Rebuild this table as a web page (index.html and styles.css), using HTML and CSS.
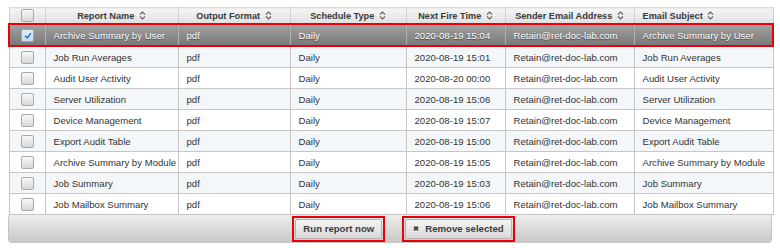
FILE: index.html
```html
<!DOCTYPE html>
<html>
<head>
<meta charset="utf-8">
<link rel="stylesheet" href="styles.css">
</head>
<body>
<div class="grid">
  <table class="tbl">
    <colgroup>
      <col class="c0"><col class="c1"><col class="c2"><col class="c3"><col class="c4"><col class="c5"><col class="c6">
    </colgroup>
    <thead>
      <tr>
        <th class="chk"><span class="box"></span></th>
        <th>Report Name <svg class="sort" width="7" height="9" viewBox="0 0 7 9"><path d="M1 3.5 L3.5 1 L6 3.5 M1 5.5 L3.5 8 L6 5.5" fill="none" stroke="#666" stroke-width="1.2"/></svg></th>
        <th>Output Format <svg class="sort" width="7" height="9" viewBox="0 0 7 9"><path d="M1 3.5 L3.5 1 L6 3.5 M1 5.5 L3.5 8 L6 5.5" fill="none" stroke="#666" stroke-width="1.2"/></svg></th>
        <th>Schedule Type <svg class="sort" width="7" height="9" viewBox="0 0 7 9"><path d="M1 3.5 L3.5 1 L6 3.5 M1 5.5 L3.5 8 L6 5.5" fill="none" stroke="#666" stroke-width="1.2"/></svg></th>
        <th>Next Fire Time <svg class="sort" width="7" height="9" viewBox="0 0 7 9"><path d="M1 3.5 L3.5 1 L6 3.5 M1 5.5 L3.5 8 L6 5.5" fill="none" stroke="#666" stroke-width="1.2"/></svg></th>
        <th>Sender Email Address <svg class="sort" width="7" height="9" viewBox="0 0 7 9"><path d="M1 3.5 L3.5 1 L6 3.5 M1 5.5 L3.5 8 L6 5.5" fill="none" stroke="#666" stroke-width="1.2"/></svg></th>
        <th class="left">Email Subject <svg class="sort" width="7" height="9" viewBox="0 0 7 9"><path d="M1 3.5 L3.5 1 L6 3.5 M1 5.5 L3.5 8 L6 5.5" fill="none" stroke="#666" stroke-width="1.2"/></svg></th>
      </tr>
    </thead>
    <tbody>
      <tr class="sel">
        <td class="chk"><span class="box on"><svg width="10" height="9" viewBox="0 0 10 9"><path d="M2 4.8 L4.2 6.8 L8 2.2" fill="none" stroke="#2a6fc9" stroke-width="1.5"/></svg></span></td>
        <td>Archive Summary by User</td><td>pdf</td><td>Daily</td><td>2020-08-19 15:04</td><td>Retain@ret-doc-lab.com</td><td>Archive Summary by User</td>
      </tr>
      <tr class="alt"><td class="chk"><span class="box"></span></td><td>Job Run Averages</td><td>pdf</td><td>Daily</td><td>2020-08-19 15:01</td><td>Retain@ret-doc-lab.com</td><td>Job Run Averages</td></tr>
      <tr><td class="chk"><span class="box"></span></td><td>Audit User Activity</td><td>pdf</td><td>Daily</td><td>2020-08-20 00:00</td><td>Retain@ret-doc-lab.com</td><td>Audit User Activity</td></tr>
      <tr class="alt"><td class="chk"><span class="box"></span></td><td>Server Utilization</td><td>pdf</td><td>Daily</td><td>2020-08-19 15:06</td><td>Retain@ret-doc-lab.com</td><td>Server Utilization</td></tr>
      <tr><td class="chk"><span class="box"></span></td><td>Device Management</td><td>pdf</td><td>Daily</td><td>2020-08-19 15:07</td><td>Retain@ret-doc-lab.com</td><td>Device Management</td></tr>
      <tr class="alt"><td class="chk"><span class="box"></span></td><td>Export Audit Table</td><td>pdf</td><td>Daily</td><td>2020-08-19 15:00</td><td>Retain@ret-doc-lab.com</td><td>Export Audit Table</td></tr>
      <tr><td class="chk"><span class="box"></span></td><td>Archive Summary by Module</td><td>pdf</td><td>Daily</td><td>2020-08-19 15:05</td><td>Retain@ret-doc-lab.com</td><td>Archive Summary by Module</td></tr>
      <tr class="alt"><td class="chk"><span class="box"></span></td><td>Job Summary</td><td>pdf</td><td>Daily</td><td>2020-08-19 15:03</td><td>Retain@ret-doc-lab.com</td><td>Job Summary</td></tr>
      <tr><td class="chk"><span class="box"></span></td><td>Job Mailbox Summary</td><td>pdf</td><td>Daily</td><td>2020-08-19 15:06</td><td>Retain@ret-doc-lab.com</td><td>Job Mailbox Summary</td></tr>
    </tbody>
  </table>
  <div class="foot">
    <span class="hl"><button class="btn">Run report now</button></span>
    <span class="hl"><button class="btn"><span class="x">&#10006;</span>Remove selected</button></span>
  </div>
</div>
</body>
</html>
```
FILE: styles.css
```css
html, body { margin: 0; padding: 0; background: #fff; }
body { padding: 7px 8px 0 8px; font-family: "Liberation Sans", Arial, sans-serif; font-size: 9.6px; color: #333; }
.grid { width: 764px; }
.tbl { width: 764px; border-collapse: collapse; table-layout: fixed; }
.c0 { width: 36px; } .c1 { width: 133px; } .c2 { width: 112px; } .c3 { width: 116px; }
.c4 { width: 99px; } .c5 { width: 129px; } .c6 { width: 139px; }
th, td { border: 1px solid #c6c6c6; height: 20px; padding: 0 8px; text-align: left; white-space: nowrap; overflow: hidden; }
th { height: 15px; padding: 0 4px; background: linear-gradient(#f5f5f5, #e0e0e0); font-weight: bold; font-size: 9.2px; color: #3a3a3a; text-align: center; border-color: #d0d0d0; border-top-color: #dcdcdc; }
th.left { text-align: left; padding-left: 8px; }
.sort { vertical-align: -1px; margin-left: 2px; }
td.chk, th.chk { text-align: center; padding: 0; }
.box { display: inline-block; width: 13px; height: 13px; box-sizing: border-box; border: 1px solid #a9a9a9; border-radius: 2px; background: linear-gradient(#f8f8f8, #d8d8d8); vertical-align: middle; position: relative; }
.box.on { background: linear-gradient(#e4eef9, #c4d8ee); border-color: #8ea9c8; }
.box svg { position: absolute; left: 1px; top: 1px; }
tbody tr { background: #fff; }
tbody tr.alt { background: #f4f7fa; }
tr.sel td { background: linear-gradient(#a0a0a0, #7a7a7a); color: #fff; text-shadow: 0 1px 1px #444; border-top: 2px solid #e8000b; border-bottom: 2px solid #e8000b; border-left-color: #b0b0b0; border-right-color: #b0b0b0; }
tr.sel td:first-child { border-left: 2px solid #e8000b; }
tr.sel td:last-child { border-right: 2px solid #e8000b; }
.foot { height: 27px; border: 1px solid #c6c6c6; border-top: none; border-radius: 0 0 4px 4px; background: linear-gradient(#ededed, #c8c8c8); display: flex; justify-content: center; align-items: center; padding-left: 27px; gap: 17px; }
.hl { display: inline-flex; border: 2px solid #e8000b; padding: 1px; }
.btn { font-family: "Liberation Sans", Arial, sans-serif; font-size: 9.6px; font-weight: bold; color: #3c3c3c; height: 20px; padding: 0 7px; border: 1px solid #b3b3b3; border-radius: 2px; background: linear-gradient(#f4f4f4, #d9d9d9); }
.x { font-size: 7px; color: #2c3e5a; margin-right: 6px; vertical-align: 1px; }
```
